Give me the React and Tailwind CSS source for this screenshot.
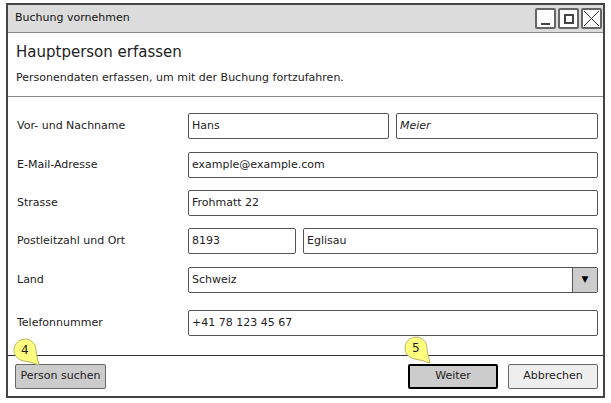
import React from "react";

const font = { fontFamily: '"DejaVu Sans", "Liberation Sans", sans-serif' };

function Field({ value, className = "" }) {
    return (
        <div className={`h-[26px] border-[1.5px] border-[#555] rounded-[2px] bg-white flex items-center px-[3px] text-[11px] text-[#222] ${className}`}>
            {value}
        </div>
    );
}

function Row({ label, children, className = "" }) {
    return (
        <div className={`flex items-center ${className}`}>
            <div className="w-[171px] text-[11px] text-[#222]">{label}</div>
            <div className="flex-1 flex gap-[7px]">{children}</div>
        </div>
    );
}

function Badge({ n, className }) {
    return (
        <div className={`absolute w-[30px] h-[28px] ${className}`}>
            <svg width="30" height="28" viewBox="0 0 30 28" className="absolute inset-0">
                <path
                    d="M23.4 8.4 A11 11 0 1 0 10.9 22.8 Q19 24 27 27 Q24 16 23.4 8.4 Z"
                    fill="#ffff80"
                    stroke="#b5b56a"
                    strokeWidth="1"
                />
            </svg>
            <span className="absolute left-[9px] top-[3px] text-[12px] text-[#222]">{n}</span>
        </div>
    );
}

function WinButton({ children }) {
    return (
        <div className="w-[21px] h-[21px] border-2 border-[#666] rounded-[2px] bg-white flex items-center justify-center">
            {children}
        </div>
    );
}

export default function App() {
    return (
        <div className="w-[611px] h-[403px] bg-white pt-[3px] pl-[6px]" style={font}>
            <div className="w-[599px] h-[395px] border-2 border-[#444] flex flex-col relative">
                <div className="h-[28px] bg-[#dcdcdc] border-b border-[#888] flex items-center justify-between pl-[7px] pr-[1px]">
                    <span className="text-[11px] text-[#111] font-medium">Buchung vornehmen</span>
                    <div className="flex gap-[2px]">
                        <WinButton>
                            <div className="w-[9px] h-[2px] bg-[#444] mt-[10px]" />
                        </WinButton>
                        <WinButton>
                            <div className="w-[10px] h-[10px] border-2 border-[#444]" />
                        </WinButton>
                        <WinButton>
                            <svg width="17" height="17" viewBox="0 0 17 17">
                                <path d="M1 1 L16 16 M16 1 L1 16" stroke="#333" strokeWidth="1" />
                            </svg>
                        </WinButton>
                    </div>
                </div>
                <div className="h-[64px] border-b border-[#888] px-[8px] pt-[9px]">
                    <div className="text-[15px] text-[#222] leading-[20px]">Hauptperson erfassen</div>
                    <div className="text-[11px] text-[#222] mt-[8px]">Personendaten erfassen, um mit der Buchung fortzufahren.</div>
                </div>
                <div className="flex-1 pl-[9px] pr-[5px] pt-[16px] flex flex-col">
                    <Row label="Vor- und Nachname">
                        <Field value="Hans" className="w-[201px]" />
                        <Field value="Meier" className="flex-1 italic" />
                    </Row>
                    <Row label="E-Mail-Adresse" className="mt-[13px]">
                        <Field value="example@example.com" className="flex-1" />
                    </Row>
                    <Row label="Strasse" className="mt-[12px]">
                        <Field value="Frohmatt 22" className="flex-1" />
                    </Row>
                    <Row label="Postleitzahl und Ort" className="mt-[12px]">
                        <Field value="8193" className="w-[108px]" />
                        <Field value="Eglisau" className="flex-1" />
                    </Row>
                    <Row label="Land" className="mt-[13px]">
                        <div className="flex-1 h-[26px] border-[1.5px] border-[#555] rounded-[2px] bg-white flex items-stretch text-[11px] text-[#222]">
                            <div className="flex-1 flex items-center px-[3px]">Schweiz</div>
                            <div className="w-[25px] bg-[#cccccc] border-l-[1.5px] border-[#555] flex items-center justify-center text-[9px] text-black">▼</div>
                        </div>
                    </Row>
                    <Row label="Telefonnummer" className="mt-[17px]">
                        <Field value="+41 78 123 45 67" className="flex-1" />
                    </Row>
                </div>
                <div className="h-[41px] border-t border-[#333] flex items-start pt-[8px] pl-[7px] pr-[5px] text-[11px] text-[#222]">
                    <div className="w-[91px] h-[25px] bg-[#cccccc] border-[1.5px] border-[#666] rounded-[2px] flex items-center justify-center">Person suchen</div>
                    <div className="flex-1" />
                    <div className="w-[90px] h-[25px] bg-[#cccccc] border-2 border-black rounded-[2px] flex items-center justify-center">Weiter</div>
                    <div className="w-[90px] h-[25px] ml-[10px] bg-[#eeeeee] border-[1.5px] border-[#666] rounded-[2px] flex items-center justify-center">Abbrechen</div>
                </div>
                <Badge n="4" className="left-[4px] top-[333px]" />
                <Badge n="5" className="left-[395px] top-[331px]" />
            </div>
        </div>
    );
}
